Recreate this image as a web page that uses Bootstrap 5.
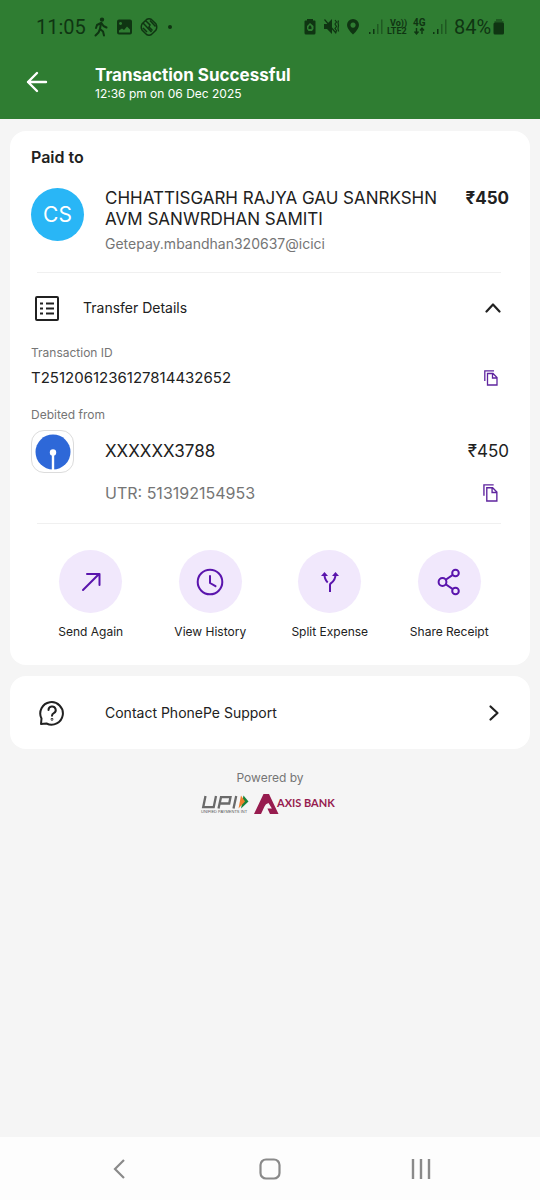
<!DOCTYPE html>
<html lang="en">
<head>
<meta charset="utf-8">
<meta name="viewport" content="width=device-width, initial-scale=1">
<title>Transaction Successful</title>
<link href="https://cdn.jsdelivr.net/npm/bootstrap@5.3.0/dist/css/bootstrap.min.css" rel="stylesheet">
<style>
  body { font-family: Inter, "Noto Sans", sans-serif; background: #f5f5f5; color: #212121; }
  svg { display: block; flex: none; }
  .plain { background: none; border: 0; padding: 0; color: inherit; }
  .top { background: #2f7d32; }
  .status { height: 54px; padding: 0 35px 0 36px; font: 20px/24px Roboto, sans-serif; color: #0f3512; }
  .appbar { height: 65px; padding: 0 26px; }
  .appbar-text { margin-left: 47px; padding-top: 11px; }
  .appbar h1 { font-size: 17px; line-height: 20px; font-weight: 700; }
  .t12 { font-size: 12px; line-height: 18px; }
  .t14 { font-size: 14px; line-height: 20px; }
  .t15 { font-size: 15px; line-height: 20px; }
  .t16 { font-size: 16px; line-height: 20px; }
  .t17 { font-size: 17px; line-height: 21px; }
  .grey { color: #757575; }
  .panel { background: #fff; border: 0; border-radius: 16px; margin: 0 10px 11px; }
  .pad { padding: 16px 21px 24px; }
  .rule { height: 1px; background: #f0f0f0; margin: 18px 8px 0 6px; }
  .payee { margin-top: 21px; }
  .toggle { height: 40px; margin-top: 15px; }
  .below { margin-top: 6px; }
  .debit { margin-top: 18px; }
  .avatar { width: 53px; height: 53px; background: #29b6f6; color: #fff; font-size: 21px; }
  .lead-col { width: 74px; flex: none; }
  .copy { width: 37px; color: #5f259f; }
  .utr { min-height: 24px; }
  .actions { margin-top: 26px; }
  .caption-text { display: block; margin-top: 10px; }
  .disc { width: 63px; height: 63px; background: #f1e8fc; color: #5a14ad; }
  .bank { width: 43px; height: 43px; border: 1px solid #dcdcdc; border-radius: 13px; }
  .support { height: 73px; padding: 0 21px; }
  .powered { margin-top: 20px; }
  .sysnav { height: 63px; padding: 0 44px; background: #fdfdfd; color: #8a8a8a; }
</style>
</head>
<body>
<div class="d-flex flex-column min-vh-100">
  <header class="top text-white">
    <div class="status d-flex align-items-center justify-content-between">
      <div class="d-flex align-items-center">
        <span>11:05</span>
        <svg class="ms-2" width="15" height="20" viewBox="1 0 15 20" fill="none" stroke="currentColor" stroke-width="2" stroke-linecap="round" stroke-linejoin="round"><circle cx="9" cy="2.6" r="1.2" fill="currentColor"/><path d="M8 6 7 12 10 14.500 11 18.500M7 12 5.500 15.500 2.500 18.500M8 6 4 8 3 11M8.500 6 10.500 9 13.500 10.500"/></svg>
        <svg class="ms-2" width="15" height="16" viewBox="0 0 15 16"><path fill="currentColor" fill-rule="evenodd" d="M2 .5h11a2 2 0 0 1 2 2v11a2 2 0 0 1-2 2H2a2 2 0 0 1-2-2v-11a2 2 0 0 1 2-2zM2 11.500v2h11v-3l-3-3-3 3.500-2-1.500zM3.500 3a1.500 1.500 0 1 0 .1 0z"/></svg>
        <svg class="ms-2" width="18" height="18" viewBox="0 0 18 18" fill="none" stroke="currentColor" stroke-width="1.500"><path d="M6.500 1.500Q9 .2 11.500 1.500L16 6q1.500 3 0 6l-4.500 4.500q-2.500 1.300-5 0L2 12Q.5 9 2 6zM3.500 5.500l8 8.500M6 3l4 4-1 2 3.500 3.500M10 2.500l5.500 6M3 10l4 4"/></svg>
        <svg class="ms-2" width="6" height="4" viewBox="-2 0 6 4"><circle cx="2" cy="2" r="2" fill="currentColor" /></svg>
      </div>
      <svg width="202" height="28" viewBox="303 13 202 28" fill="currentColor">
        <path fill-rule="evenodd" d="M307 19h6v1.500h1.500a1 1 0 0 1 1 1V33a1.500 1.500 0 0 1-1.500 1.500h-8a1.500 1.500 0 0 1-1.500-1.500V21.500a1 1 0 0 1 1-1h1.500zM310 23l-3 3v3l1.500 2h3.500l1.500-2v-3zM310 25l1.500 2v2h-3v-2z"/>
        <path d="M324 24h3l5-5v15l-5-5h-3z"/><path d="m324.500 19.500 11 13M335 20l1.500 2-1.500 2 1.500 2.500-1.500 2 1.500 2-1 3M338.500 20.500l-.5 2 .5 3-.5 3 .5 3" fill="none" stroke="currentColor" stroke-width="1.200"/>
        <path fill-rule="evenodd" d="M353 19a6 6 0 0 1 6 6q0 4-6 9.500-6-5.500-6-9.500a6 6 0 0 1 6-6zm0 3.500a2.600 2.600 0 1 0 .1 0z"/>
        <path d="M369 32h1.500v2H369zM373 29h1.500v5H373zM433 32h1.500v2H433zM437 29h1.500v5H437z"/>
        <path opacity=".5" d="M377 24h1.500v10H377zM381 19.500h1.500V34H381zM441 24h1.500v10H441zM445 19.500h1.500V34H445z"/>
        <g font-family="Roboto, sans-serif" font-weight="700"><text x="390" y="26" font-size="9">Vo))</text><text x="387" y="34" font-size="9">LTE2</text><text x="413" y="26" font-size="10">4G</text></g>
        <path d="M416.500 28v5.500m-2-2 2 2.500 2-2.500M422 34v-5.500m-2 2 2-2.500 2 2.500" fill="none" stroke="currentColor" stroke-width="1.400"/>
        <text x="454" y="34" font-family="Roboto, sans-serif" font-size="20">84%</text>
        <path opacity=".5" d="M496 19h6v2h1.500v3h-9v-3h1.500z"/><rect x="493.500" y="22.500" width="10.500" height="12" rx="1.500"/>
      </svg>
    </div>
    <div class="appbar d-flex align-items-start">
      <button class="plain mt-3" aria-label="Back"><svg width="22" height="24" viewBox="0 0 22 24" fill="none" stroke="currentColor" stroke-width="2.400" stroke-linecap="round" stroke-linejoin="round"><path d="M20 12H2M11 3l-9 9 9 9"/></svg></button>
      <div class="appbar-text"><h1 class="m-0">Transaction Successful</h1><div class="t12">12:36 pm on 06 Dec 2025</div></div>
    </div>
  </header>

  <main class="pt-2">
    <section class="panel pad mt-1">
      <h2 class="t16 fw-semibold m-0">Paid to</h2>
      <div class="payee d-flex align-items-start">
        <div class="lead-col"><div class="avatar rounded-circle d-flex align-items-center justify-content-center">CS</div></div>
        <div class="flex-grow-1 t17">
          <div>CHHATTISGARH RAJYA GAU SANRKSHN<br>AVM SANWRDHAN SAMITI</div>
          <div class="t14 grey mt-1">Getepay.mbandhan320637@icici</div>
        </div>
        <div class="t17 fw-bold">₹450</div>
      </div>
      <div class="rule"></div>

      <button class="plain toggle d-flex align-items-center w-100 text-start" aria-expanded="true">
        <svg class="ms-1" width="24" height="25" viewBox="0 0 24 25" fill="none" stroke="currentColor" stroke-width="2"><rect x="1" y="1" width="22" height="23" rx="1"/><path d="M5 7.500h3M5 12.500h3M5 17.500h3M11 7.500h8M11 12.500h8M11 17.500h8" stroke-width="1.800"/></svg>
        <span class="t14 flex-grow-1 ms-4">Transfer Details</span>
        <svg class="me-2" width="16" height="10" viewBox="0 0 16 10" fill="none" stroke="currentColor" stroke-width="2.200" stroke-linecap="round" stroke-linejoin="round"><path d="m1.500 8.500 6.500-7 6.500 7"/></svg>
      </button>
      <div class="t12 grey mt-3">Transaction ID</div>
      <div class="below d-flex align-items-center">
        <span class="t15 flex-grow-1">T2512061236127814432652</span>
        <button class="plain copy d-flex justify-content-center" aria-label="Copy transaction ID"><svg width="14" height="16" viewBox="0 0 14 16" fill="none" stroke="currentColor" stroke-width="1.300"><path d="M.8 11V.8H10M3.500 3.500h5.500l4 4V15H3.500zM8.500 3.500V8H13"/></svg></button>
      </div>
      <div class="t12 grey debit">Debited from</div>
      <div class="below d-flex align-items-center">
        <div class="lead-col"><div class="bank d-flex align-items-center justify-content-center"><svg width="36" height="36" viewBox="0 0 36 36"><circle cx="18" cy="18" r="17.500" fill="#2e68d8"/><circle cx="18" cy="18.500" r="3.200" fill="#fff"/><path d="M16.800 19h2.400v17h-2.400z" fill="#fff"/></svg></div></div>
        <div class="t17 flex-grow-1">XXXXXX3788</div>
        <div class="t17">₹450</div>
      </div>
      <div class="utr d-flex align-items-center mt-2">
        <div class="lead-col"></div>
        <div class="t16 grey flex-grow-1">UTR: 513192154953</div>
        <button class="plain copy d-flex justify-content-center" aria-label="Copy UTR"><svg width="15" height="18" viewBox="0 0 14 17" fill="none" stroke="currentColor" stroke-width="1.300"><path d="M.8 11V.8H10M3.500 3.500h5.500l4 4V16H3.500zM8.500 3.500V8H13"/></svg></button>
      </div>
      <div class="rule"></div>

      <div class="actions row g-0 text-center t12">
        <div class="col"><button class="plain w-100"><span class="disc rounded-circle mx-auto d-flex align-items-center justify-content-center"><svg width="28" height="28" viewBox="0 0 28 28" fill="none" stroke="currentColor" stroke-width="2" stroke-linecap="round" stroke-linejoin="round"><path d="M6 22 22 6M10 6h12.500v11"/></svg></span><span class="caption-text">Send Again</span></button></div>
        <div class="col"><button class="plain w-100"><span class="disc rounded-circle mx-auto d-flex align-items-center justify-content-center"><svg width="28" height="28" viewBox="0 0 28 28" fill="none" stroke="currentColor" stroke-width="2" stroke-linecap="round" stroke-linejoin="round"><circle cx="14" cy="14" r="12.300"/><path d="M14 8v7l5.500 3.200"/></svg></span><span class="caption-text">View History</span></button></div>
        <div class="col"><button class="plain w-100"><span class="disc rounded-circle mx-auto d-flex align-items-center justify-content-center"><svg width="28" height="28" viewBox="0 0 28 28" fill="none" stroke="currentColor" stroke-width="2"><path d="M14 24v-7q0-1 .8-1.600Q19.500 12 19.500 6.500M8.500 6.500q0 5 3.200 8"/><path fill="currentColor" stroke="none" d="M8.500 4l3.500 4H5zM19.500 4l3.500 4h-7z"/></svg></span><span class="caption-text">Split Expense</span></button></div>
        <div class="col"><button class="plain w-100"><span class="disc rounded-circle mx-auto d-flex align-items-center justify-content-center"><svg width="28" height="28" viewBox="0 0 28 28" fill="none" stroke="currentColor" stroke-width="2"><circle cx="7.500" cy="14" r="3.900"/><circle cx="20.500" cy="5" r="3.300"/><circle cx="20.500" cy="23" r="3.300"/><path d="M10.700 11.800 17.800 6.900M10.700 16.200l7.100 4.900"/></svg></span><span class="caption-text">Share Receipt</span></button></div>
      </div>
    </section>

    <a href="#" class="panel support d-flex align-items-center text-reset text-decoration-none">
      <span class="lead-col"><svg class="ms-2" width="26" height="26" viewBox="0 0 26 26" fill="none" stroke="currentColor" stroke-width="2" stroke-linecap="round" stroke-linejoin="round"><path d="M2.500 18.500A11.300 11.300 0 1 1 7.500 23.500L2 24z"/><path d="M9.500 10a3.600 3.600 0 1 1 5.300 3.200q-1.800 1-1.800 2.600"/><circle cx="13" cy="19.300" r=".4"/></svg></span>
      <span class="t14 flex-grow-1">Contact PhonePe Support</span>
      <svg class="me-2" width="14" height="18" viewBox="0 0 14 18" fill="none" stroke="currentColor" stroke-width="2.200" stroke-linecap="round" stroke-linejoin="round"><path d="m3.500 2.500 7 6.500-7 6.500"/></svg>
    </a>

    <div class="powered text-center t12 grey">
      <div>Powered by</div>
      <svg class="below mx-auto" width="140" height="22" viewBox="199 793 140 22" role="img" aria-label="UPI and Axis Bank">
        <path d="M204.500 796l-2.300 11.200h10.500L215 796M217.500 808.500l2.500-11.300h9.500l-1.300 6.300h-9.500M232.500 808.500l2.700-12.500" fill="none" stroke="#6a6a6a" stroke-width="2.300"/>
        <path d="M242.500 795.500l5 6-7.500 7z" fill="#17853c"/><path d="M240 795.500l4 6-6.500 7z" fill="#ee7f2d"/>
        <text x="200" y="812.500" font-family="Liberation Sans, sans-serif" font-size="4" fill="#555">UNIFIED PAYMENTS INT</text>
        <path d="M262.500 794h5.500l9.500 20h-8.500l-2.600-5.500h4.500l-3.400-5.500q-3 .5-4 3.500l-3.500 7.500H253z" fill="#971c4f"/>
        <text x="276" y="807" font-family="Lato, sans-serif" font-weight="700" font-size="11" fill="#971c4f">AXIS BANK</text>
      </svg>
    </div>
  </main>

  <nav class="sysnav mt-auto row g-0 align-items-center" aria-label="System">
    <div class="col-4 d-flex justify-content-center"><button class="plain" aria-label="Back"><svg width="14" height="22" viewBox="0 0 14 22" fill="none" stroke="currentColor" stroke-width="2.200"><path d="M12 2 3 11l9 9"/></svg></button></div>
    <div class="col-4 d-flex justify-content-center"><button class="plain" aria-label="Home"><svg width="22" height="22" viewBox="0 0 22 22" fill="none" stroke="currentColor" stroke-width="2.200"><rect x="1.500" y="1.500" width="19" height="19" rx="5.500"/></svg></button></div>
    <div class="col-4 d-flex justify-content-center"><button class="plain" aria-label="Recent apps"><svg width="20" height="22" viewBox="0 0 20 22" stroke="currentColor" stroke-width="2.400"><path d="M2 1v20M10 1v20M18 1v20"/></svg></button></div>
  </nav>
</div>
<script src="https://cdn.jsdelivr.net/npm/bootstrap@5.3.0/dist/js/bootstrap.bundle.min.js"></script>
</body>
</html>
